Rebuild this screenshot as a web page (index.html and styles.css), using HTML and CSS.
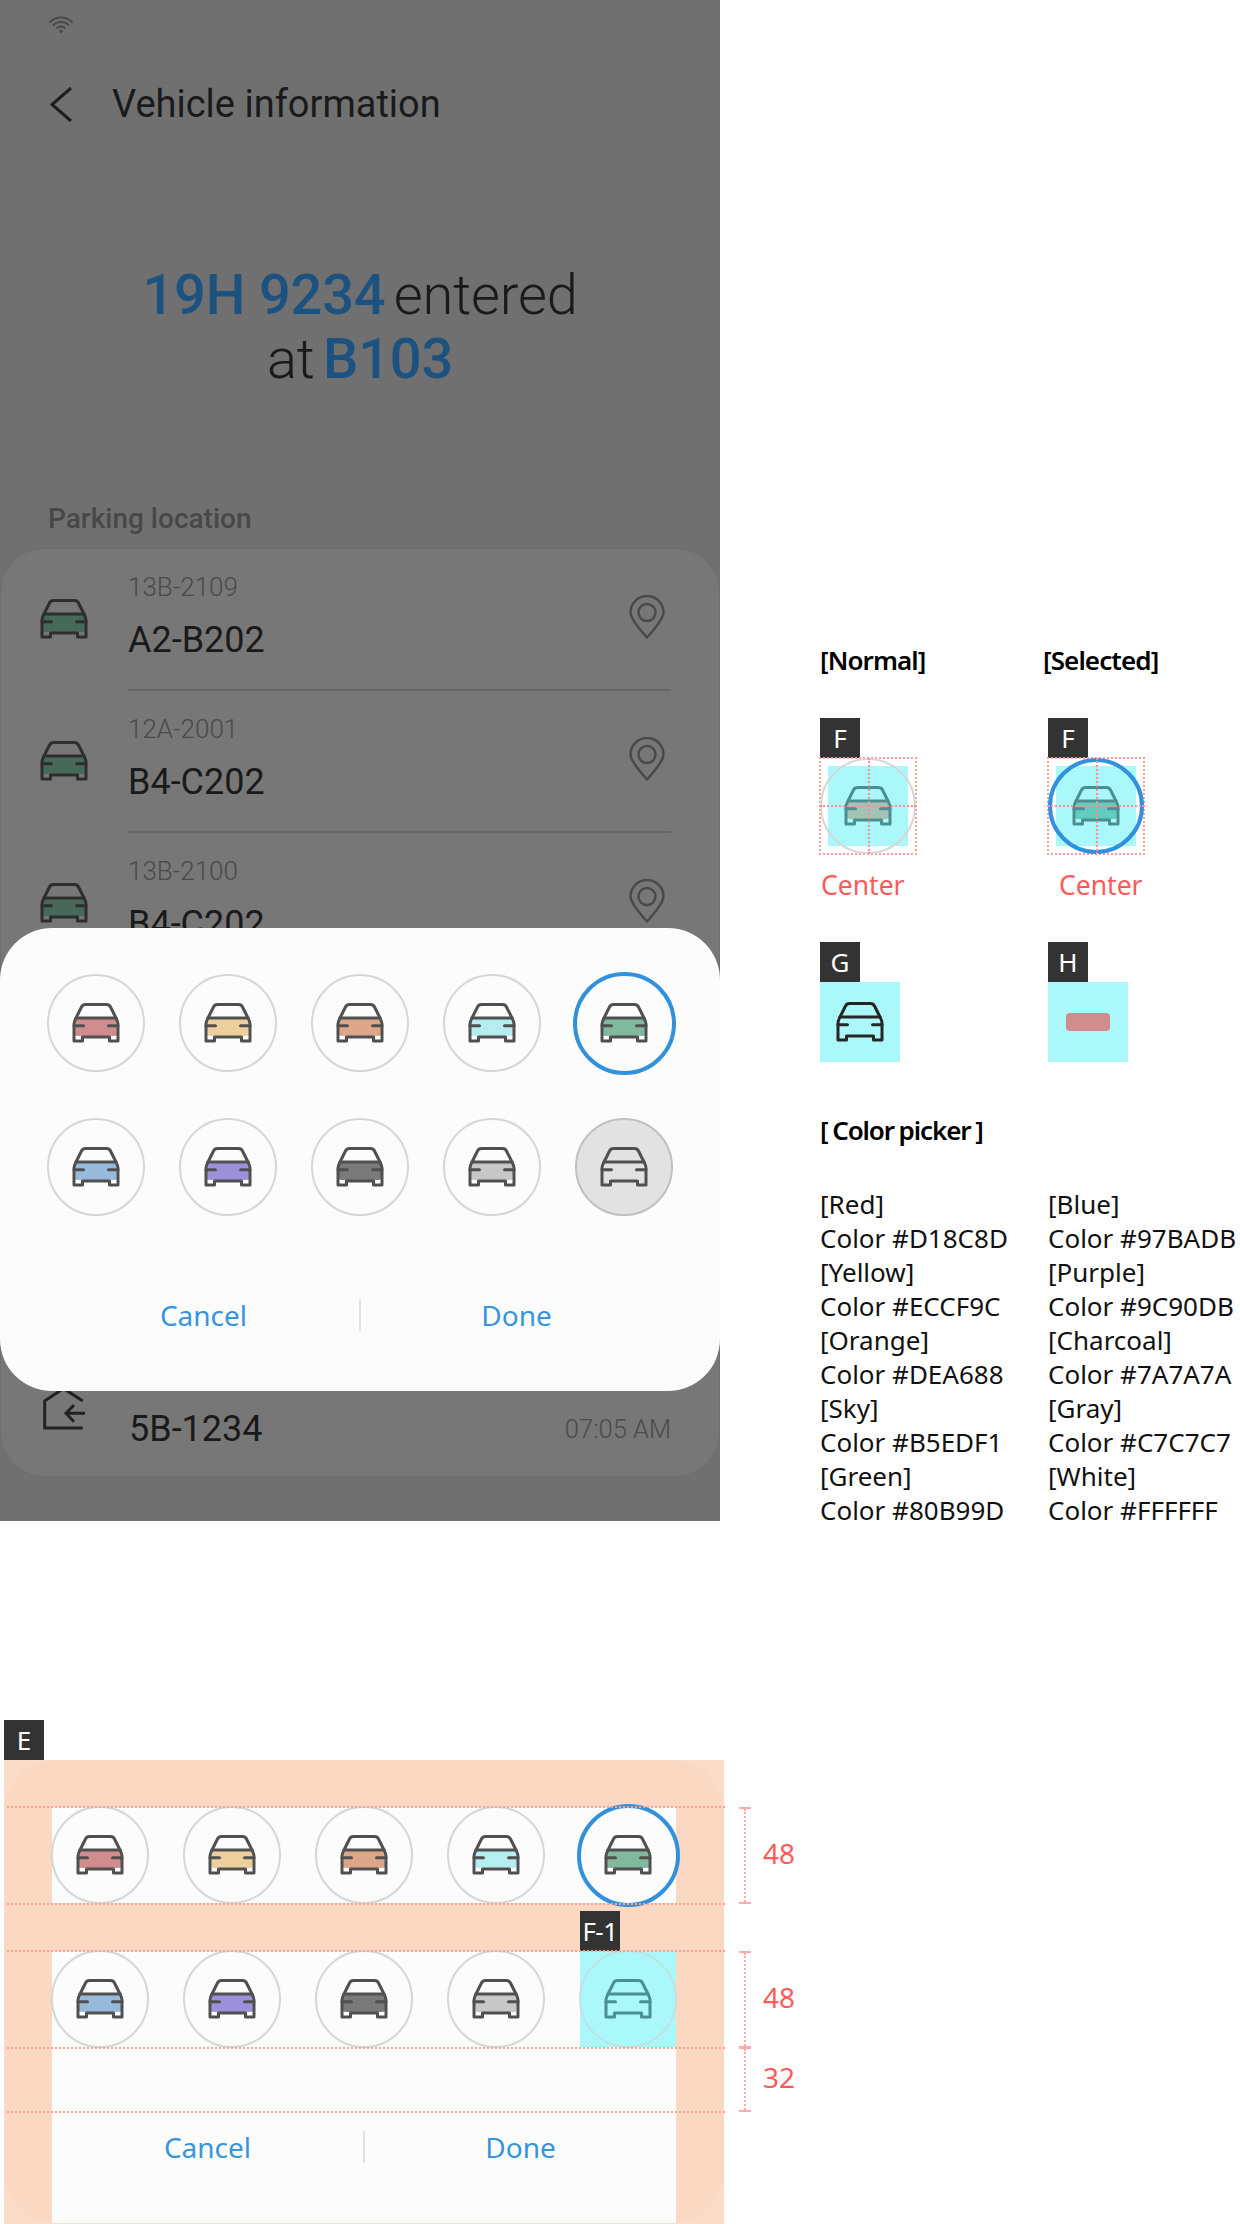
FILE: index.html
```html
<!DOCTYPE html>
<html lang="en">

<head>
  <meta charset="UTF-8">
  <meta name="viewport" content="width=device-width, initial-scale=1.0">
  <title>Vehicle information - color picker spec</title>
  <link rel="stylesheet" href="styles.css">
</head>

<body>
  <svg class="sprite" aria-hidden="true">
    <symbol id="car" viewBox="0 0 80 80">
      <rect class="car-body" x="18" y="35" width="44" height="18" rx="4" />
      <path class="car-line" d="M18 41C18 38.5 19 37 20 35L25.5 24C26.3 22.4 27.5 21.5 29.5 21.5H50.5C52.5 21.5 53.7 22.4 54.5 24L60 35C61 37 62 38.5 62 41V58H53.5V54H26.5V58H18Z" />
      <path class="car-line" d="M20 35H60M18 42.7H27.5M52.5 42.7H62" />
    </symbol>
    <symbol id="pin" viewBox="0 0 36 44">
      <path class="pin-line" d="M18 42.5C18 42.5 1.5 25 1.5 17.5A16.5 16.5 0 0 1 34.500 17.500C34.500 25 18 42.500 18 42.500Z" />
      <circle class="pin-line" cx="18" cy="17.500" r="8.500" />
    </symbol>
  </svg>

  <div class="top">
    <!-- phone, dimmed behind the sheet -->
    <div class="phone">
      <div class="status">
        <svg class="wifi" viewBox="0 0 26 19">
          <path d="M1.500 8.500A16 16 0 0 1 24.500 8.500M5 11.500A11 11 0 0 1 21 11.500M8.500 14.500A6 6 0 0 1 17.500 14.500" />
          <circle cx="13" cy="17.300" r="1.700" />
        </svg>
      </div>
      <div class="appbar">
        <svg class="back" viewBox="0 0 22 35">
          <path d="M21 1L2 17.500L21 34" />
        </svg>
        <span class="appbar-title">Vehicle information</span>
      </div>
      <div class="hero">
        <div><b>19H 9234</b> entered</div>
        <div>at <b>B103</b></div>
      </div>
      <div class="section-title">Parking location</div>
      <div class="card">
        <div class="row">
          <svg class="car car-list"><use href="#car" /></svg>
          <div class="row-text">
            <div class="row-sub">13B-2109</div>
            <div class="row-main">A2-B202</div>
          </div>
          <svg class="pin"><use href="#pin" /></svg>
        </div>
        <div class="row">
          <svg class="car car-list"><use href="#car" /></svg>
          <div class="row-text">
            <div class="row-sub">12A-2001</div>
            <div class="row-main">B4-C202</div>
          </div>
          <svg class="pin"><use href="#pin" /></svg>
        </div>
        <div class="row">
          <svg class="car car-list"><use href="#car" /></svg>
          <div class="row-text">
            <div class="row-sub">13B-2100</div>
            <div class="row-main">B4-C202</div>
          </div>
          <svg class="pin"><use href="#pin" /></svg>
        </div>
        <div class="history">
          <svg class="entry" viewBox="0 0 42 42">
            <path d="M38.700 12L19.500 -0.600L0.700 12V39H38.700" />
            <path d="M41 24.300H22M30 16L22 24.300L30 32.700" />
          </svg>
          <span class="history-plate">5B-1234</span>
          <span class="history-time">07:05 AM</span>
        </div>
      </div>

      <div class="sheet sheet-phone">
        <div class="swatches">
          <div class="cell"><div class="circle"><svg class="car red"><use href="#car" /></svg></div></div>
          <div class="cell"><div class="circle"><svg class="car yellow"><use href="#car" /></svg></div></div>
          <div class="cell"><div class="circle"><svg class="car orange"><use href="#car" /></svg></div></div>
          <div class="cell"><div class="circle"><svg class="car sky"><use href="#car" /></svg></div></div>
          <div class="cell"><div class="circle selected"><svg class="car green"><use href="#car" /></svg></div></div>
        </div>
        <div class="swatches">
          <div class="cell"><div class="circle"><svg class="car blue"><use href="#car" /></svg></div></div>
          <div class="cell"><div class="circle"><svg class="car purple"><use href="#car" /></svg></div></div>
          <div class="cell"><div class="circle"><svg class="car charcoal"><use href="#car" /></svg></div></div>
          <div class="cell"><div class="circle"><svg class="car gray"><use href="#car" /></svg></div></div>
          <div class="cell"><div class="circle pressed"><svg class="car"><use href="#car" /></svg></div></div>
        </div>
        <div class="actions">
          <span class="action">Cancel</span>
          <span class="action-sep"></span>
          <span class="action">Done</span>
        </div>
      </div>
    </div>

    <!-- notes on the right -->
    <div class="spec">
      <div class="spec-col">
        <div class="spec-head">[Normal]</div>
        <div class="tag tag-first">F</div>
        <div class="probe">
          <div class="probe-fill"></div>
          <div class="circle"><svg class="car tint tint-normal"><use href="#car" /></svg></div>
          <div class="probe-h"></div>
          <div class="probe-v"></div>
        </div>
        <div class="center-note">Center</div>
        <div class="tag tag-next">G</div>
        <div class="asset"><svg class="car car-asset"><use href="#car" /></svg></div>
      </div>
      <div class="spec-col">
        <div class="spec-head spec-head-second">[Selected]</div>
        <div class="tag tag-first">F</div>
        <div class="probe">
          <div class="probe-fill"></div>
          <div class="circle selected"><svg class="car tint tint-selected"><use href="#car" /></svg></div>
          <div class="probe-h"></div>
          <div class="probe-v"></div>
        </div>
        <div class="center-note center-note-second">Center</div>
        <div class="tag tag-next">H</div>
        <div class="asset"><div class="asset-body"></div></div>
      </div>
      <div class="spec-head picker-head">[ Color picker ]</div>
      <ul class="colors">
        <li>[Red]</li>
        <li>Color #D18C8D</li>
        <li>[Yellow]</li>
        <li>Color #ECCF9C</li>
        <li>[Orange]</li>
        <li>Color #DEA688</li>
        <li>[Sky]</li>
        <li>Color #B5EDF1</li>
        <li>[Green]</li>
        <li>Color #80B99D</li>
      </ul>
      <ul class="colors">
        <li>[Blue]</li>
        <li>Color #97BADB</li>
        <li>[Purple]</li>
        <li>Color #9C90DB</li>
        <li>[Charcoal]</li>
        <li>Color #7A7A7A</li>
        <li>[Gray]</li>
        <li>Color #C7C7C7</li>
        <li>[White]</li>
        <li>Color #FFFFFF</li>
      </ul>
    </div>
  </div>

  <!-- sheet with the margins marked -->
  <div class="guide">
    <div class="tag">E</div>
    <div class="guide-frame">
      <div class="sheet sheet-guide">
        <div class="swatches">
          <div class="cell"><div class="circle"><svg class="car red"><use href="#car" /></svg></div></div>
          <div class="cell"><div class="circle"><svg class="car yellow"><use href="#car" /></svg></div></div>
          <div class="cell"><div class="circle"><svg class="car orange"><use href="#car" /></svg></div></div>
          <div class="cell"><div class="circle"><svg class="car sky"><use href="#car" /></svg></div></div>
          <div class="cell"><div class="circle selected"><svg class="car green"><use href="#car" /></svg></div></div>
        </div>
        <div class="swatches">
          <div class="cell"><div class="circle"><svg class="car blue"><use href="#car" /></svg></div></div>
          <div class="cell"><div class="circle"><svg class="car purple"><use href="#car" /></svg></div></div>
          <div class="cell"><div class="circle"><svg class="car charcoal"><use href="#car" /></svg></div></div>
          <div class="cell"><div class="circle"><svg class="car gray"><use href="#car" /></svg></div></div>
          <div class="cell cell-mark">
            <div class="tag tag-over">F-1</div>
            <div class="circle circle-mark"><svg class="car tint tint-empty"><use href="#car" /></svg></div>
          </div>
        </div>
        <div class="actions">
          <span class="action">Cancel</span>
          <span class="action-sep"></span>
          <span class="action">Done</span>
        </div>
      </div>
      <div class="rule rule-a"></div>
      <div class="rule rule-b"></div>
      <div class="rule rule-c"></div>
      <div class="rule rule-d"></div>
      <div class="rule rule-e"></div>
      <div class="dim dim-a"></div>
      <div class="dim dim-b"></div>
      <div class="dim dim-c"></div>
      <div class="dim-label dim-label-a">48</div>
      <div class="dim-label dim-label-b">48</div>
      <div class="dim-label dim-label-c">32</div>
    </div>
  </div>
</body>

</html>
```
FILE: styles.css
```css
html {
  font-size: 10px;
}

body {
  margin: 0;
  padding: 0;
  width: 1240px;
  height: 2224px;
  overflow: hidden;
  background: #fff;
  font-family: "Noto Sans", sans-serif;
}

.sprite {
  position: absolute;
  width: 0;
  height: 0;
}

.top {
  display: flex;
  height: 1527px;
}

/* phone */
.phone {
  position: relative;
  flex: none;
  width: 720px;
  height: 1521px;
  overflow: hidden;
  background: #707070;
  font-family: Roboto, sans-serif;
  color: #1a1a1a;
}

.status {
  height: 60px;
  padding: 14px 0 0 48px;
  box-sizing: border-box;
}

.wifi {
  display: block;
  width: 26px;
  height: 19px;
  fill: #4a4a4a;
}

.wifi path {
  fill: none;
  stroke: #4a4a4a;
  stroke-width: 2;
}

.appbar {
  display: flex;
  align-items: center;
  height: 88px;
  padding-left: 50px;
}

.back {
  width: 22px;
  height: 35px;
  margin-right: 40px;
  fill: none;
  stroke: #1e1e1e;
  stroke-width: 3;
}

.appbar-title {
  font-size: 38px;
}

.hero {
  margin-top: 115px;
  font-size: 56px;
  font-weight: 300;
  line-height: 64px;
  letter-spacing: -0.2px;
  word-spacing: -5px;
  text-align: center;
}

.hero b {
  font-weight: 500;
  word-spacing: 0;
  color: #1c5280;
}

.section-title {
  margin: 108px 0 0 48px;
  font-size: 28px;
  font-weight: 500;
  line-height: 40px;
  color: #484848;
}

.card {
  margin-top: 9px;
  height: 929px;
  box-sizing: border-box;
  border: 1px solid #6e6e6e;
  border-radius: 44px;
  background: #777;
}

.row {
  display: flex;
  align-items: center;
  height: 142px;
  padding: 0 54px 0 39px;
  box-sizing: border-box;
}

.row:nth-child(2) .row-text,
.row:nth-child(1) .row-text {
  border-bottom: 2px solid #666;
}

.row-text {
  align-self: stretch;
  flex: 1;
  width: 0;
  margin: 0 -42px 0 0;
  box-sizing: border-box;
}

.row-sub {
  margin-top: 19px;
  font-size: 26px;
  font-weight: 300;
  line-height: 38px;
  color: #4a4a4a;
}

.row-main {
  margin-top: 13px;
  font-size: 36px;
  line-height: 42px;
}

.pin {
  position: relative;
  flex: none;
  width: 36px;
  height: 44px;
  margin-top: -6px;
}

.pin-line {
  fill: none;
  stroke: #4a4a4a;
  stroke-width: 2.500;
}

.history {
  display: flex;
  align-items: center;
  height: 96px;
  margin-top: 406px;
  padding: 0 48px 0 43px;
}

.entry {
  flex: none;
  align-self: flex-start;
  width: 42px;
  height: 42px;
  margin: 8px 43px 0 0;
  overflow: visible;
  fill: none;
  stroke: #222;
  stroke-width: 3;
}

.history-plate {
  flex: 1;
  font-size: 36px;
}

.history-time {
  font-size: 25.500px;
  font-weight: 300;
  color: #4a4a4a;
}

/* car icon */
.car {
  flex: none;
  width: 80px;
  height: 80px;
  color: #505050;
}

.car-body {
  fill: var(--body, transparent);
}

.car-line {
  fill: none;
  stroke: currentColor;
  stroke-width: 3;
  stroke-linejoin: round;
  stroke-linecap: round;
}

.red { --body: #d18c8d; }
.yellow { --body: #eccf9c; }
.orange { --body: #dea688; }
.sky { --body: #b5edf1; }
.green { --body: #80b99d; }
.blue { --body: #97badb; }
.purple { --body: #9c90db; }
.charcoal { --body: #7a7a7a; }
.gray { --body: #c7c7c7; }

.car-list {
  margin: -2px 24px 0 -16px;
  color: #2e2e2e;
  --body: #46695a;
}

/* color sheet */
.sheet {
  width: 720px;
  height: 463px;
  box-sizing: border-box;
  padding: 47px 48px 0;
  border-radius: 52px;
  background: #fcfcfc;
}

.sheet-phone {
  position: absolute;
  left: 0;
  top: 928px;
}

.swatches {
  display: flex;
  justify-content: space-between;
  margin-bottom: 48px;
}

.cell {
  position: relative;
  display: flex;
  align-items: center;
  justify-content: center;
  width: 96px;
  height: 96px;
}

.circle {
  display: flex;
  flex: none;
  align-items: center;
  justify-content: center;
  width: 98px;
  height: 98px;
  box-sizing: border-box;
  border: 2px solid #d6d6d6;
  border-radius: 50%;
}

.selected {
  width: 103px;
  height: 103px;
  border: 4px solid #3191dd;
}

.pressed {
  background: #e2e2e2;
  border-color: #c0c0c0;
}

.actions {
  display: flex;
  align-items: center;
  height: 72px;
  margin-top: 64px;
}

.action {
  flex: 1;
  font-family: "Noto Sans", sans-serif;
  font-size: 28px;
  text-align: center;
  color: #3595de;
}

.action-sep {
  width: 2px;
  height: 32px;
  background: #e2e2e2;
}

/* right column */
.spec {
  display: grid;
  grid-template-columns: 228px 228px;
  align-content: start;
  padding: 640px 0 0 100px;
}

.spec-col {
  display: flex;
  flex-direction: column;
  align-items: flex-start;
}

.spec-head {
  font-size: 26px;
  font-weight: 600;
  line-height: 40px;
  letter-spacing: -0.9px;
  color: #000;
}

.spec-head-second {
  margin-left: -5px;
}

.tag {
  display: flex;
  align-items: center;
  justify-content: center;
  width: 40px;
  height: 40px;
  background: #333;
  font-size: 26px;
  color: #fff;
}

.tag-first {
  margin-top: 38px;
}

.tag-next {
  margin-top: 37px;
}

.tag-over {
  position: absolute;
  left: 0;
  top: -40px;
  letter-spacing: -0.500px;
}

.probe {
  position: relative;
  display: flex;
  align-items: center;
  justify-content: center;
  width: 96px;
  height: 96px;
  outline: 2px dotted #ff9a9a;
  outline-offset: -1px;
}

.probe-fill {
  position: absolute;
  inset: 8px;
  background: #abf8fa;
}

.probe .circle {
  position: relative;
  width: 96px;
  height: 96px;
}

.probe-h,
.probe-v {
  position: absolute;
}

.probe-h {
  left: 0;
  right: 0;
  top: 47px;
  border-top: 2px dotted #ff8e8e;
}

.probe-v {
  top: 0;
  bottom: 0;
  left: 48px;
  border-left: 2px dotted #ff8e8e;
}

.tint {
  color: #4b8f92;
}

.tint-normal { --body: #a3c4b4; }
.tint-selected { --body: #60cdbd; }
.tint-empty { --body: transparent; }

.center-note {
  margin: 11px 0 0 1px;
  font-size: 26.500px;
  line-height: 40px;
  color: #ff5a5a;
}

.center-note-second {
  margin-left: 11px;
}

.asset {
  display: flex;
  align-items: center;
  justify-content: center;
  width: 80px;
  height: 80px;
  background: #abf8fa;
}

.car-asset {
  color: #262626;
}

.asset-body {
  width: 44px;
  height: 18px;
  border-radius: 4px;
  background: #d18c8d;
}

.picker-head {
  grid-column: 1 / 3;
  margin-top: 48px;
  letter-spacing: -1.100px;
  word-spacing: -1px;
}

.colors {
  margin: 37px 0 0;
  padding: 0;
  list-style: none;
  font-size: 26px;
  line-height: 34px;
  color: #111;
  white-space: nowrap;
}

/* guide section */
.guide {
  margin: 193px 0 0 4px;
}

.guide-frame {
  position: relative;
  width: 720px;
  height: 464px;
  background: #fbdcc8;
}

.sheet-guide {
  background: #fad8c2;
}

.sheet-guide .swatches {
  background: #fcfcfc;
}

.sheet-guide .actions {
  height: 176px;
  margin: -48px 0 0;
  padding: 64px 0 40px;
  box-sizing: border-box;
  background: #fcfcfc;
}

.cell-mark {
  background: #abf8fa;
}

.circle-mark {
  border-color: #c2e2e2;
}

.rule {
  position: absolute;
  left: 3px;
  width: 718px;
  border-top: 2px dotted #ff9e94;
}

.rule-a { top: 46px; }
.rule-b { top: 143px; }
.rule-c { top: 190px; }
.rule-d { top: 287px; }
.rule-e { top: 351px; }

.dim {
  position: absolute;
  left: 735px;
  width: 12px;
  box-sizing: border-box;
  border-top: 2px solid #ffabab;
  border-bottom: 2px solid #ffabab;
}

.dim::after {
  content: "";
  position: absolute;
  left: 5px;
  top: 0;
  bottom: 0;
  border-left: 2px dotted #ffabab;
}

.dim-a { top: 47px; height: 97px; }
.dim-b { top: 191px; height: 97px; }
.dim-c { top: 287px; height: 65px; }

.dim-label {
  position: absolute;
  left: 759px;
  font-size: 28px;
  line-height: 40px;
  color: #ff5a5a;
}

.dim-label-a { top: 73px; }
.dim-label-b { top: 217px; }
.dim-label-c { top: 297px; }
```
